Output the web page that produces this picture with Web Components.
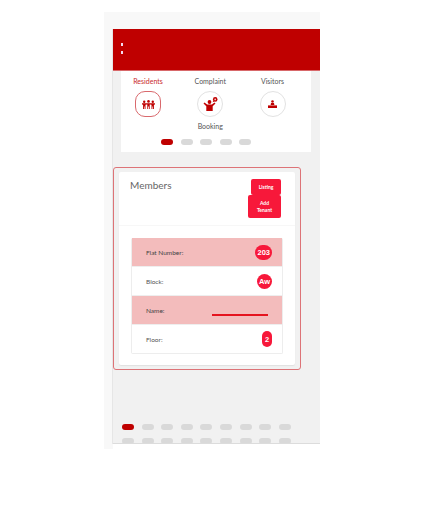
<!DOCTYPE html>
<html>
<head>
<meta charset="utf-8">
<title>Members</title>
<style>
  html, body { margin: 0; background: #fff; }
  body { font-family: "Lato", "Liberation Sans", sans-serif; color: #4a4a4a; }
</style>
</head>
<body>
<app-shell>
  <top-bar></top-bar>
  <menu-card>
    <menu-tile label="Residents" active>
      <svg viewBox="0 0 13 9" width="13" height="9" fill="#bf0000"><circle cx="2.2" cy="1.8" r="1.2"/><circle cx="6.5" cy="1.4" r="1.3"/><circle cx="10.8" cy="1.8" r="1.2"/><path d="M0 3.2h13v1.200l-1.100.4V9H11V6.600h-.6V9h-.9V4.800l-1.200-.4-.6.2V9h-.8V6.400h-.8V9h-.8V4.600l-.6-.2-1.200.4V9h-.9V6.600h-.6V9h-.9V4.800L0 4.400z"/></svg>
    </menu-tile>
    <menu-tile label="Complaint">
      <svg viewBox="0 0 15 14" width="15" height="14" fill="#bf0000"><circle cx="6.5" cy="5" r="1.9"/><path d="M.5 6.4l1-.8 2.6 1.900h4.800l2.600-1.900 1 .8-2.800 2.900V14H3.300V9.300z"/><circle cx="12.200" cy="2.400" r="2.300"/><circle cx="12.200" cy="2.400" r=".9" fill="#f3c0c0"/><path d="M10.500 3.800l-1 1.400 2-.6z"/></svg>
    </menu-tile>
    <menu-tile label="Visitors">
      <svg viewBox="0 0 9 8" width="9" height="8" fill="#bf0000"><circle cx="4.500" cy="1.500" r="1.300"/><path d="M3 3h3l.4 2H2.600z"/><path d="M0 5.400h9V8H0z"/></svg>
    </menu-tile>
    <menu-tile label="Booking" bare></menu-tile>
    <dot-row count="5" slot="dots"></dot-row>
  </menu-card>
  <members-card>
    <member-row label="Flat Number:" shaded><value-badge>203</value-badge></member-row>
    <member-row label="Block:"><value-badge>Aw</value-badge></member-row>
    <member-row label="Name:" shaded><name-line></name-line></member-row>
    <member-row label="Floor:"><value-badge tall>2</value-badge></member-row>
  </members-card>
  <dot-row count="9" slot="pager"></dot-row>
  <dot-row count="9" muted slot="pager"></dot-row>
</app-shell>

<script>
// small helper so every element gets an open shadow root from a string
function shadow(el, html) {
  el.attachShadow({ mode: 'open' }).innerHTML = html;
}

class AppShell extends HTMLElement {
  connectedCallback() {
    shadow(this, `
      <style>
        :host { display: block; box-sizing: border-box; width: 216px; height: 437px; margin: 12px 0 0 104px; padding: 17px 0 0 9px; background: #f8f8f8; }
        .main { height: 414px; background: #f1f1f1; display: flex; flex-direction: column; overflow: hidden; border-bottom: 1px solid #dcdcdc; box-shadow: -1px 0 #e6e6e6; }
        ::slotted(*) { flex: none; }
        .pager { flex: none; display: flex; flex-direction: column; gap: 8px; padding: 0 0 0 9px; margin-top: 54px; }
        .foot { height: 5px; background: #fff; }
      </style>
      <div class="main">
        <slot></slot>
        <div class="pager"><slot name="pager"></slot></div>
      </div>
      <div class="foot"></div>`);
  }
}

class TopBar extends HTMLElement {
  connectedCallback() {
    shadow(this, `
      <style>
        :host { display: block; height: 42px; background: #bf0000; box-sizing: border-box; padding: 14px 0 0 8px; border-bottom: 1px solid #d8686a; }
        i { display: block; width: 2px; height: 3px; background: #f3dcf0; margin-bottom: 5px; }
      </style>
      <i></i><i></i>`);
  }
}

class MenuCard extends HTMLElement {
  connectedCallback() {
    shadow(this, `
      <style>
        :host { display: block; width: 190px; height: 81px; margin-left: 8px; background: #fff; box-sizing: border-box; padding-top: 6px; }
        .grid { display: grid; grid-template-columns: repeat(3, 36px); column-gap: 26.25px; padding-left: 9px; justify-items: center; row-gap: 5px; }
        .dots { display: flex; padding-left: 40px; margin-top: 9px; }
      </style>
      <div class="grid"><slot></slot></div>
      <div class="dots"><slot name="dots"></slot></div>`);
  }
}

class MenuTile extends HTMLElement {
  connectedCallback() {
    const bare = this.hasAttribute('bare');
    const active = this.hasAttribute('active');
    shadow(this, `
      <style>
        :host { display: flex; flex-direction: column; align-items: center; gap: 6px; font-size: 7px; line-height: 8px; color: ${active ? '#c9282d' : '#555'}; white-space: nowrap; }
        :host([bare]) { grid-column: 2; }
        .ring { width: 26px; height: 26px; box-sizing: border-box; border: 1px solid ${active ? '#d9696d' : '#e2e2e2'}; border-radius: ${active ? '10px' : '50%'}; display: flex; align-items: center; justify-content: center; background: #fff; }
        .ring ::slotted(svg) { display: block; }
      </style>
      <span>${this.getAttribute('label')}</span>
      ${bare ? '' : '<div class="ring"><slot></slot></div>'}`);
  }
}

class DotRow extends HTMLElement {
  connectedCallback() {
    const count = Number(this.getAttribute('count'));
    const muted = this.hasAttribute('muted');
    let dots = '';
    for (let i = 0; i < count; i++) {
      dots += `<i class="${i === 0 && !muted ? 'on' : ''}"></i>`;
    }
    shadow(this, `
      <style>
        :host { display: flex; gap: 7.6px; }
        i { display: block; width: 12px; height: 6px; border-radius: 3px; background: #d9d9d9; }
        i.on { background: #bf0000; }
      </style>
      ${dots}`);
  }
}

class MembersCard extends HTMLElement {
  connectedCallback() {
    shadow(this, `
      <style>
        :host { display: block; box-sizing: border-box; width: 188px; height: 203px; margin-top: 15px; border: 1px solid #dd7377; border-radius: 3px; padding: 4px 5px; }
        .card { height: 100%; box-sizing: border-box; background: #fff; border-radius: 2px; box-shadow: 0 1px 1px #e0e0e0; }
        header { height: 54px; box-sizing: border-box; border-bottom: 1px solid #f7f7f7; padding: 7px 14px 0 11px; display: flex; justify-content: space-between; }
        h2 { margin: 0; font-size: 10px; line-height: 12px; font-weight: 400; color: #666; }
        .actions { display: flex; flex-direction: column; align-items: flex-end; }
        button { display: block; border: 0; padding: 0; background: #f7183a; color: #fff; font: 700 5px/7px "Lato", "Liberation Sans", sans-serif; border-radius: 2px; }
        .listing { width: 30px; height: 16px; }
        .add { width: 33px; height: 23px; }
        .table { margin: 12px 12px 0 12px; border: 1px solid #ededed; border-top: 0; border-radius: 2px; }
      </style>
      <div class="card">
        <header>
          <h2>Members</h2>
          <div class="actions">
            <button class="listing">Listing</button>
            <button class="add">Add<br>Tenant</button>
          </div>
        </header>
        <div class="table"><slot></slot></div>
      </div>`);
  }
}

class MemberRow extends HTMLElement {
  connectedCallback() {
    shadow(this, `
      <style>
        :host { display: flex; align-items: center; justify-content: space-between; box-sizing: border-box; height: 29px; padding: 0 10px 0 14px; font-size: 6.5px; color: #555; background: #fff; border-bottom: 1px solid #eee; }
        :host([shaded]) { background: #f3bcbc; color: #444; }
        :host(:last-child) { height: 28px; border-bottom: 0; }
      </style>
      <span>${this.getAttribute('label')}</span>
      <slot></slot>`);
  }
}

class ValueBadge extends HTMLElement {
  connectedCallback() {
    shadow(this, `
      <style>
        :host { display: flex; align-items: center; justify-content: center; min-width: 15px; height: 15px; padding: 0 2px; border-radius: 8px; background: #f7183a; color: #fff; font: 700 7.5px "Liberation Sans", sans-serif; box-sizing: border-box; }
        :host([tall]) { min-width: 10px; width: 10px; height: 16px; padding: 0; border-radius: 5px; }
      </style>
      <slot></slot>`);
  }
}

class NameLine extends HTMLElement {
  connectedCallback() {
    shadow(this, `
      <style>
        :host { display: block; width: 56px; height: 1.5px; background: #e5141f; margin: 10px 4px 0 0; }
      </style>`);
  }
}

customElements.define('app-shell', AppShell);
customElements.define('top-bar', TopBar);
customElements.define('menu-card', MenuCard);
customElements.define('menu-tile', MenuTile);
customElements.define('dot-row', DotRow);
customElements.define('members-card', MembersCard);
customElements.define('member-row', MemberRow);
customElements.define('value-badge', ValueBadge);
customElements.define('name-line', NameLine);
</script>
</body>
</html>
